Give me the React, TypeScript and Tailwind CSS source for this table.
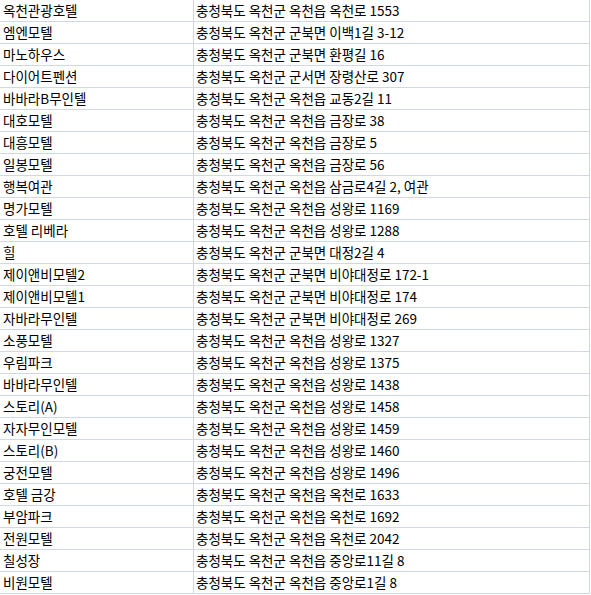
import React from "react";

const rows: [string, string][] = [
  ["옥천관광호텔", "충청북도 옥천군 옥천읍 옥천로 1553"],
  ["엠엔모텔", "충청북도 옥천군 군북면 이백1길 3-12"],
  ["마노하우스", "충청북도 옥천군 군북면 환평길 16"],
  ["다이어트펜션", "충청북도 옥천군 군서면 장령산로 307"],
  ["바바라B무인텔", "충청북도 옥천군 옥천읍 교동2길 11"],
  ["대호모텔", "충청북도 옥천군 옥천읍 금장로 38"],
  ["대흥모텔", "충청북도 옥천군 옥천읍 금장로 5"],
  ["일봉모텔", "충청북도 옥천군 옥천읍 금장로 56"],
  ["행복여관", "충청북도 옥천군 옥천읍 삼금로4길 2, 여관"],
  ["명가모텔", "충청북도 옥천군 옥천읍 성왕로 1169"],
  ["호텔 리베라", "충청북도 옥천군 옥천읍 성왕로 1288"],
  ["힐", "충청북도 옥천군 군북면 대정2길 4"],
  ["제이앤비모텔2", "충청북도 옥천군 군북면 비야대정로 172-1"],
  ["제이앤비모텔1", "충청북도 옥천군 군북면 비야대정로 174"],
  ["자바라무인텔", "충청북도 옥천군 군북면 비야대정로 269"],
  ["소풍모텔", "충청북도 옥천군 옥천읍 성왕로 1327"],
  ["우림파크", "충청북도 옥천군 옥천읍 성왕로 1375"],
  ["바바라무인텔", "충청북도 옥천군 옥천읍 성왕로 1438"],
  ["스토리(A)", "충청북도 옥천군 옥천읍 성왕로 1458"],
  ["자자무인모텔", "충청북도 옥천군 옥천읍 성왕로 1459"],
  ["스토리(B)", "충청북도 옥천군 옥천읍 성왕로 1460"],
  ["궁전모텔", "충청북도 옥천군 옥천읍 성왕로 1496"],
  ["호텔 금강", "충청북도 옥천군 옥천읍 옥천로 1633"],
  ["부암파크", "충청북도 옥천군 옥천읍 옥천로 1692"],
  ["전원모텔", "충청북도 옥천군 옥천읍 옥천로 2042"],
  ["칠성장", "충청북도 옥천군 옥천읍 중앙로11길 8"],
  ["비원모텔", "충청북도 옥천군 옥천읍 중앙로1길 8"],
];

export default function App() {
  return (
    <div
      className="w-[591px] h-[595px] bg-white text-black overflow-hidden"
      style={{ fontFamily: '"Noto Sans CJK KR", "Liberation Sans", sans-serif' }}
    >
      <div className="grid grid-cols-[194px_396px] w-[590px]">
        {rows.map(([name, addr], i) => (
          <React.Fragment key={i}>
            <div className="h-[22px] border-b border-r border-[#d0d7e5] pl-[3px] text-[13.5px] leading-[21px] whitespace-nowrap overflow-hidden">
              {name}
            </div>
            <div className="h-[22px] border-b border-r border-[#d0d7e5] pl-[2px] text-[13.5px] leading-[21px] whitespace-nowrap overflow-hidden">
              {addr}
            </div>
          </React.Fragment>
        ))}
      </div>
    </div>
  );
}
